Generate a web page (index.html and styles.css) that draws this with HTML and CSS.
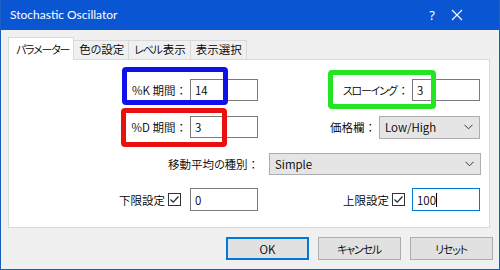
FILE: index.html
```html
<!DOCTYPE html>
<html lang="ja">
<head>
<meta charset="utf-8">
<title>Stochastic Oscillator</title>
<link rel="stylesheet" href="styles.css">
</head>
<body>
<div class="window">
  <div class="titlebar">
    <span class="title">Stochastic Oscillator</span>
    <span class="help">?</span>
    <svg class="close" width="12" height="12" viewBox="0 0 12 12"><path d="M1 1L11 11M11 1L1 11" stroke="#fff" stroke-width="1.1" fill="none"/></svg>
  </div>
  <div class="body">
    <div class="tabs">
      <div class="tab active"><span class="kn">パラメーター</span></div>
      <div class="tab">色<span class="kn">の</span>設定</div>
      <div class="tab"><span class="kn">レベル</span>表示</div>
      <div class="tab">表示選択</div>
    </div>
    <div class="panel">
      <div class="row">
        <div class="cell left"><span class="label">%K 期間：</span><div class="input">14</div></div>
        <div class="cell right"><span class="label"><span class="kn">スローイング</span>：</span><div class="input">3</div></div>
      </div>
      <div class="row">
        <div class="cell left"><span class="label">%D 期間：</span><div class="input">3</div></div>
        <div class="cell right"><span class="label">価格欄：</span><div class="select narrow"><span>Low/High</span><svg width="9" height="6" viewBox="0 0 9 6"><path d="M0.5 0.8L4.5 4.8L8.5 0.8" stroke="#333" fill="none"/></svg></div></div>
      </div>
      <div class="row">
        <div class="cell full"><span class="label">移動平均<span class="kn">の</span>種別：</span><div class="select wide"><span>Simple</span><svg width="9" height="6" viewBox="0 0 9 6"><path d="M0.5 0.8L4.5 4.8L8.5 0.8" stroke="#333" fill="none"/></svg></div></div>
      </div>
      <div class="row last">
        <div class="cell left"><span class="label">下限設定</span><span class="check"><svg width="11" height="11" viewBox="0 0 11 11"><path d="M1.5 5.5L4.2 8.2L9.5 2.5" stroke="#222" stroke-width="1.2" fill="none"/></svg></span><div class="input">0</div></div>
        <div class="cell right"><span class="label">上限設定</span><span class="check"><svg width="11" height="11" viewBox="0 0 11 11"><path d="M1.5 5.5L4.2 8.2L9.5 2.5" stroke="#222" stroke-width="1.2" fill="none"/></svg></span><div class="input focus">100<span class="caret"></span></div></div>
      </div>
      <div class="hl hl-blue"></div>
      <div class="hl hl-red"></div>
      <div class="hl hl-green"></div>
    </div>
    <div class="buttons">
      <div class="btn default">OK</div>
      <div class="btn"><span class="kn">キャンセル</span></div>
      <div class="btn"><span class="kn">リセット</span></div>
    </div>
  </div>
</div>
</body>
</html>
```
FILE: styles.css
```css
html, body {
  margin: 0;
  padding: 0;
}
body {
  width: 500px;
  height: 270px;
  overflow: hidden;
  font-family: "Noto Sans CJK JP", "Noto Sans", sans-serif;
  font-size: 11.5px;
  font-weight: 350;
  color: #000;
}
.kn {
  font-feature-settings: "palt";
  font-size: 11px;
  letter-spacing: -1.2px;
  margin-right: 1px;
}
.window {
  box-sizing: border-box;
  width: 500px;
  height: 270px;
  border: 1px solid #1a5fc0;
  border-top: none;
  background: #f0f0f0;
  display: flex;
  flex-direction: column;
}
.titlebar {
  height: 30px;
  background: #0a56d2;
  color: #fff;
  display: flex;
  align-items: center;
  flex: none;
}
.title {
  font-family: "Lato", sans-serif;
  font-weight: 400;
  font-size: 12px;
  margin-left: 9px;
  flex: 1;
  padding-bottom: 1px;
}
.help {
  font-family: "Noto Sans", sans-serif;
  font-weight: 400;
  font-size: 13px;
  margin-right: 16px;
}
.close {
  margin-right: 36px;
}
.body {
  padding: 7px 9px 0 7px;
  display: flex;
  flex-direction: column;
}
.tabs {
  display: flex;
  align-items: flex-end;
  height: 22px;
  position: relative;
  z-index: 1;
}
.tab {
  box-sizing: border-box;
  height: 19px;
  line-height: 17px;
  padding: 0 4px 0 5px;
  border: 1px solid #d9d9d9;
  border-bottom: none;
  margin-left: -1px;
  background: #f0f0f0;
  white-space: nowrap;
}
.tab.active {
  height: 23px;
  line-height: 22px;
  margin-left: 0;
  margin-bottom: -1px;
  background: #fff;
  padding: 0 3px 0 7px;
}
.panel {
  position: relative;
  box-sizing: border-box;
  height: 169px;
  background: #fff;
  border: 1px solid #d9d9d9;
  padding: 19px 9px 0 0;
  display: flex;
  flex-direction: column;
  gap: 15px;
}
.row {
  display: flex;
  height: 22px;
}
.row.last {
  height: 23px;
  margin-top: -2px;
}
.cell {
  display: flex;
  align-items: center;
  justify-content: flex-end;
}
.cell.left {
  width: 249px;
  flex: none;
}
.cell.right {
  flex: 1;
}
.cell.full {
  flex: 1;
  margin-right: -1px;
}
.label {
  margin-right: 3px;
  white-space: nowrap;
}
.input {
  box-sizing: border-box;
  width: 68px;
  height: 100%;
  border: 1px solid #7a7a7a;
  background: #fff;
  padding-left: 4px;
  display: flex;
  align-items: center;
}
.input.focus {
  border-color: #0078d7;
  margin-left: 7px;
}
.caret {
  display: inline-block;
  width: 1px;
  height: 14px;
  background: #000;
}
.cell.left .check + .input {
  margin-left: 9px;
}
.check {
  box-sizing: border-box;
  width: 13px;
  height: 13px;
  border: 1px solid #333;
  display: flex;
  align-items: center;
  justify-content: center;
  background: #fff;
}
.select {
  box-sizing: border-box;
  height: 23px;
  border: 1px solid #adadad;
  background: #e5e5e5;
  display: flex;
  align-items: center;
  justify-content: space-between;
  padding: 0 6px 0 5px;
}
.select.narrow {
  width: 101px;
}
.select.wide {
  width: 212px;
  height: 22px;
  margin-left: 7px;
}
.hl {
  position: absolute;
  box-sizing: border-box;
  border: 5px solid;
  border-radius: 4px;
}
.hl-blue {
  left: 113px;
  top: 7px;
  width: 106px;
  height: 38px;
  border-color: #1010e8;
}
.hl-red {
  left: 112px;
  top: 48px;
  width: 106px;
  height: 39px;
  border-color: #ea1010;
}
.hl-green {
  left: 319px;
  top: 10px;
  width: 108px;
  height: 39px;
  border-color: #22e622;
}
.buttons {
  display: flex;
  justify-content: flex-end;
  gap: 9px;
  margin-top: 9px;
  margin-right: -3px;
}
.btn {
  box-sizing: border-box;
  width: 83px;
  height: 23px;
  border: 1px solid #adadad;
  background: #e1e1e1;
  display: flex;
  align-items: center;
  justify-content: center;
}
.btn.default {
  border: 2px solid #0078d7;
}
```
